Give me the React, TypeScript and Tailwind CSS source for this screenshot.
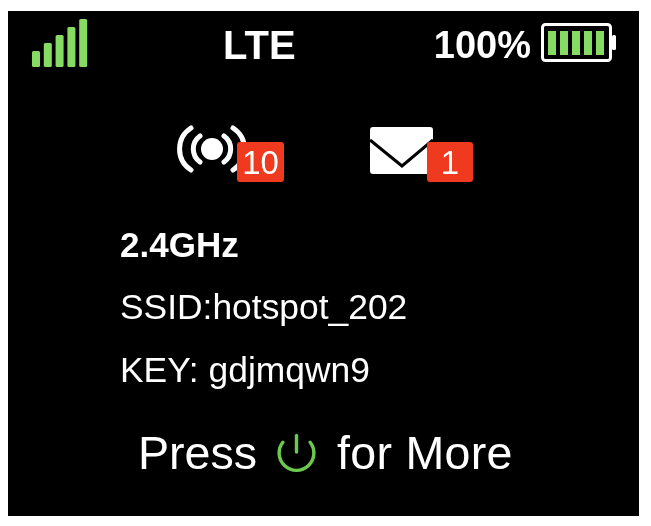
const green = "#86dc62"

function SignalBars() {
  const tops = [51, 43, 35, 27, 19]
  return (
    <svg width="56" height="48" viewBox="0 0 56 48" className="mb-[2px] shrink-0">
      {tops.map((top, i) => (
        <rect key={top} x={i * 11.8} y={top - 19} width="8" height={67 - top} rx="1.5" fill={green} />
      ))}
    </svg>
  )
}

function Battery() {
  return (
    <svg width="75" height="39" viewBox="0 0 75 39" className="mb-[5px] shrink-0">
      <rect x="1.5" y="1.5" width="68" height="36" rx="3" fill="none" stroke="#fff" strokeWidth="3" />
      <rect x="71" y="12" width="4" height="15" rx="1.5" fill="#fff" />
      {[7, 19, 31, 43, 55].map((x) => (
        <rect key={x} x={x} y="8" width="8" height="24" fill={green} />
      ))}
    </svg>
  )
}

function HotspotIcon() {
  return (
    <svg width="70" height="47" viewBox="0 0 70 47" fill="none" stroke="#fff" strokeLinecap="round" className="overflow-visible">
      <circle cx="35" cy="22" r="11" fill="#fff" stroke="none" />
      <g strokeWidth="5">
        <path d="M23 9 A 16 16 0 0 0 23 35" />
        <path d="M47 9 A 16 16 0 0 1 47 35" />
        <path d="M14 1 A 25 25 0 0 0 14 43" />
        <path d="M56 1 A 25 25 0 0 1 56 43" />
      </g>
    </svg>
  )
}

function MailIcon() {
  return (
    <svg width="63" height="47" viewBox="0 0 63 47">
      <rect width="63" height="47" rx="3" fill="#fff" />
      <path d="M0 13 L32 39 L63 13" fill="none" stroke="#000" strokeWidth="3" />
    </svg>
  )
}

function PowerIcon() {
  return (
    <svg width="39" height="40" viewBox="0 0 40 40" fill="none" stroke="#6cc94f" strokeWidth="3.5" strokeLinecap="round" className="shrink-0">
      <path d="M6 9 A 17.8 17.8 0 1 0 34 9" />
      <path d="M20 2 V 19" />
    </svg>
  )
}

function Badge({ children, className }: { children: React.ReactNode; className: string }) {
  return (
    <span className={`absolute top-[15px] flex h-10 items-center justify-center rounded-[3px] bg-[#f03a20] text-[33px] leading-none text-white ${className}`}>
      {children}
    </span>
  )
}

export default function App() {
  return (
    <div className="h-[526px] w-[651px] bg-white pl-2 pt-[11px] font-['Liberation_Sans',Arial,sans-serif]">
      <div className="flex h-[505px] w-[631px] flex-col bg-black text-white blur-[0.6px]">
        <div className="flex h-[58px] items-end pl-6 pr-[23px]">
          <SignalBars />
          <span className="ml-[135px] text-[40px] font-bold leading-[48px]">LTE</span>
          <div className="ml-auto flex items-center gap-[10px]">
            <span className="text-[38px] font-bold leading-[48px]">100%</span>
            <Battery />
          </div>
        </div>

        <div className="mt-[58px] flex h-[55px] pl-[169px]">
          <div className="relative w-[193px]">
            <HotspotIcon />
            <Badge className="left-[60px] w-[47px]">10</Badge>
          </div>
          <div className="relative">
            <MailIcon />
            <Badge className="left-[57px] w-[46px]">1</Badge>
          </div>
        </div>

        <div className="mt-[31px] flex flex-col pl-28 text-[35.4px] leading-[63px]">
          <span className="text-[35px] font-bold">2.4GHz</span>
          <span>SSID:hotspot_202</span>
          <span>KEY: gdjmqwn9</span>
        </div>

        <div className="mt-[23px] flex items-center pl-[130px] text-[46.6px] leading-[56px]">
          <span>Press</span>
          <span className="ml-5"><PowerIcon /></span>
          <span className="ml-[21px] tracking-[0.25px]">for More</span>
        </div>
      </div>
    </div>
  )
}
